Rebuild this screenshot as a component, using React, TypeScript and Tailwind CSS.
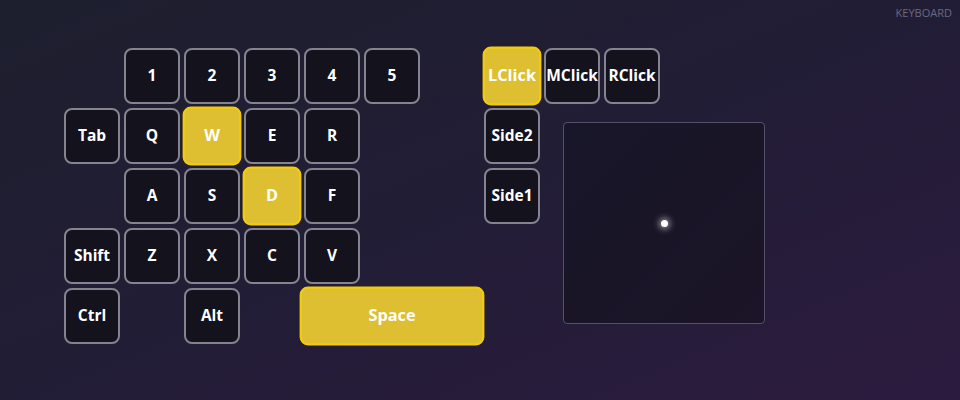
import React from "react";

type KeyDef = { label: string; col: number; row: number; span?: number; down?: boolean };

// left board keys, placed on a 7-column grid
const KEYS: KeyDef[] = [
  { label: "1", col: 2, row: 1 },
  { label: "2", col: 3, row: 1 },
  { label: "3", col: 4, row: 1 },
  { label: "4", col: 5, row: 1 },
  { label: "5", col: 6, row: 1 },
  { label: "Tab", col: 1, row: 2 },
  { label: "Q", col: 2, row: 2 },
  { label: "W", col: 3, row: 2, down: true },
  { label: "E", col: 4, row: 2 },
  { label: "R", col: 5, row: 2 },
  { label: "A", col: 2, row: 3 },
  { label: "S", col: 3, row: 3 },
  { label: "D", col: 4, row: 3, down: true },
  { label: "F", col: 5, row: 3 },
  { label: "Shift", col: 1, row: 4 },
  { label: "Z", col: 2, row: 4 },
  { label: "X", col: 3, row: 4 },
  { label: "C", col: 4, row: 4 },
  { label: "V", col: 5, row: 4 },
  { label: "Ctrl", col: 1, row: 5 },
  { label: "Alt", col: 3, row: 5 },
  { label: "Space", col: 5, row: 5, span: 3, down: true },
];

const colClass: Record<number, string> = {
  1: "col-start-1",
  2: "col-start-2",
  3: "col-start-3",
  4: "col-start-4",
  5: "col-start-5",
  6: "col-start-6",
  7: "col-start-7",
};
const rowClass: Record<number, string> = {
  1: "row-start-1",
  2: "row-start-2",
  3: "row-start-3",
  4: "row-start-4",
  5: "row-start-5",
};

function Key({ label, down, className = "" }: { label: string; down?: boolean; className?: string }) {
  return (
    <div
      className={
        "flex items-center justify-center rounded-lg border-2 text-[15.5px] font-bold text-white " +
        (down
          ? "scale-105 border-[#f2cc0c] bg-[#dfbf32] "
          : "border-[#858390] bg-[#13121d] ") +
        className
      }
    >
      {label}
    </div>
  );
}

export default function App() {
  return (
    <div
      className="relative h-[400px] w-[960px] overflow-hidden bg-gradient-to-br from-[#1d1f2e] via-[#221d36] to-[#2c1b3f]"
      style={{ fontFamily: '"Open Sans", "Noto Sans", sans-serif' }}
    >
      <div className="absolute right-2 top-[5px] text-[11px] text-[#6c6880]">KEYBOARD</div>

      <div className="flex gap-1 pl-16 pt-12">
        <div className="grid grid-cols-[repeat(7,56px)] grid-rows-[repeat(5,56px)] gap-1">
          {KEYS.map((k) => (
            <Key
              key={k.label}
              label={k.label}
              down={k.down}
              className={`${colClass[k.col]} ${rowClass[k.row]} ${k.span === 3 ? "col-span-3" : ""}`}
            />
          ))}
        </div>

        <div className="grid grid-cols-[repeat(3,56px)] grid-rows-[repeat(5,56px)] gap-1">
          <Key label="LClick" down />
          <Key label="MClick" />
          <Key label="RClick" />
          <Key label="Side2" className="col-start-1 row-start-2" />
          <Key label="Side1" className="col-start-1 row-start-3" />
          <div className="col-start-2 row-start-2 ml-[19px] mt-[14px] flex h-[202px] w-[202px] items-center justify-center rounded border border-[#55506a] bg-gradient-to-br from-[#18162a] via-[#191527] to-[#1c1428]">
            <div className="h-[7px] w-[7px] rounded-full bg-white shadow-[0_0_6px_2px_rgba(255,255,255,0.55)]" />
          </div>
        </div>
      </div>
    </div>
  );
}
